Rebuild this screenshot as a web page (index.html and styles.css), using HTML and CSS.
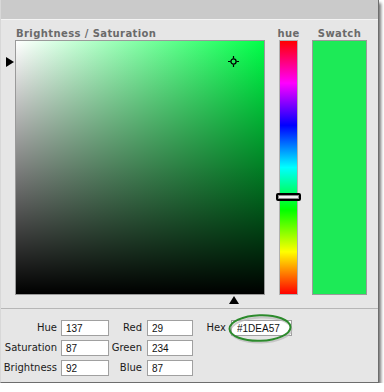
FILE: index.html
```html
<!DOCTYPE html>
<html lang="en">
<head>
<meta charset="UTF-8">
<meta name="viewport" content="width=device-width, initial-scale=1.0">
<title>Color Picker</title>
<link rel="stylesheet" href="styles.css">
</head>
<body>
<div class="window">
    <div class="titlebar"></div>

    <div class="picker">
        <div class="col sb-col">
            <div class="col-label">Brightness / Saturation</div>
            <div class="sb-box">
                <div class="sb-square"></div>
                <!-- markers: sat 87, bright 92 -->
                <div class="crosshair" style="left: 213px; top: 16px;">
                    <svg width="11" height="11" viewBox="0 0 11 11">
                        <circle cx="5.5" cy="5.5" r="2.6" fill="none" stroke="#000" stroke-width="1.3"/>
                        <path d="M5.5 0v2.5M5.5 8.5V11M0 5.5h2.5M8.5 5.5H11" stroke="#000" stroke-width="1.2"/>
                    </svg>
                </div>
                <div class="arrow-right" style="top: 16px;"></div>
                <div class="arrow-up" style="left: 213px;"></div>
            </div>
        </div>

        <div class="col hue-col">
            <div class="col-label">hue</div>
            <div class="hue-box">
                <div class="hue-bar"></div>
                <div class="hue-handle" style="top: 153px;"></div>
            </div>
        </div>

        <div class="col swatch-col">
            <div class="col-label">Swatch</div>
            <div class="swatch"></div>
        </div>
    </div>

    <div class="fields">
        <label class="lbl">Hue</label>
        <input class="field" type="text" value="137">
        <label class="lbl lbl-rgb">Red</label>
        <input class="field rgb" type="text" value="29">
        <label class="lbl lbl-hex">Hex</label>
        <div class="hex-wrap">
            <input class="field hex" type="text" value="#1DEA57">
            <svg class="ring" width="70" height="34" viewBox="0 0 70 34">
                <ellipse cx="34" cy="16" rx="30.5" ry="12.5" transform="rotate(-2 34 16)" fill="none" stroke="#b8b8b8" stroke-width="2" opacity="0.7"/>
                <ellipse cx="33" cy="14" rx="30.5" ry="12.8" transform="rotate(-2 33 14)" fill="none" stroke="#2c8a2c" stroke-width="2"/>
            </svg>
        </div>

        <label class="lbl">Saturation</label>
        <input class="field" type="text" value="87">
        <label class="lbl lbl-rgb">Green</label>
        <input class="field rgb" type="text" value="234">
        <span></span><span></span>

        <label class="lbl">Brightness</label>
        <input class="field" type="text" value="92">
        <label class="lbl lbl-rgb">Blue</label>
        <input class="field rgb" type="text" value="87">
        <span></span><span></span>
    </div>
</div>
</body>
</html>
```

FILE: styles.css
```css
body {
    margin: 0;
    padding: 0;
    background-color: #ffffff;
    font-family: "DejaVu Sans", Verdana, sans-serif;
    font-size: 10px;
    color: #1a1a1a;
}

.window {
    width: 377px;
    height: 382px;
    background-color: #e6e6e6;
    border-left: 1px solid #d8d8d8;
    border-right: 1px solid #6d6d6d;
    border-bottom: 1px solid #6d6d6d;
    box-shadow: 2px 3px 3px rgba(0, 0, 0, 0.55);
}

.titlebar {
    height: 19px;
    background-color: #cacaca;
    border-bottom: 1px solid #f4f4f4;
}

.picker {
    display: flex;
    gap: 14px;
    padding: 7px 0 0 14px;
}

.col {
    flex: none;
}

.sb-col {
    width: 250px;
}

.hue-col {
    width: 19px;
}

.swatch-col {
    width: 55px;
}

.col-label {
    display: flex;
    justify-content: center;
    height: 13px;
    line-height: 13px;
    font-weight: bold;
    color: #6a6a6a;
    letter-spacing: 0.4px;
    white-space: nowrap;
}

.sb-col .col-label {
    justify-content: flex-start;
    padding-left: 1px;
}

.sb-box {
    position: relative;
    width: 250px;
    height: 255px;
}

.sb-square {
    box-sizing: border-box;
    width: 250px;
    height: 255px;
    border: 1px solid #9a9a9a;
    background:
        linear-gradient(to top, #000000, rgba(0, 0, 0, 0)),
        linear-gradient(to right, #ffffff, #00ff48);
}

.crosshair {
    position: absolute;
    width: 11px;
    height: 11px;
}

.crosshair svg {
    display: block;
}

.arrow-right {
    position: absolute;
    left: -9px;
    width: 0;
    height: 0;
    border-top: 5px solid transparent;
    border-bottom: 5px solid transparent;
    border-left: 8px solid #000;
    margin-top: 1px;
}

.arrow-up {
    position: absolute;
    top: 256px;
    width: 0;
    height: 0;
    margin-left: 1px;
    border-left: 5px solid transparent;
    border-right: 5px solid transparent;
    border-bottom: 8px solid #000;
}

.hue-box {
    position: relative;
    width: 19px;
    height: 255px;
}

.hue-bar {
    box-sizing: border-box;
    width: 19px;
    height: 255px;
    border: 1px solid #b0b0b0;
    background: linear-gradient(to bottom, #ff0000, #ff00ff, #0000ff, #00ffff, #00ff00, #ffff00, #ff0000);
}

.hue-handle {
    position: absolute;
    left: -3px;
    width: 21px;
    height: 4px;
    border: 2px solid #000;
    border-radius: 2px;
    background-color: #f0f0f0;
    box-shadow: inset 0 0 0 1px #8a8a8a;
}

.swatch {
    box-sizing: border-box;
    width: 55px;
    height: 255px;
    border: 1px solid #9a9a9a;
    background-color: #1dea57;
}

.fields {
    display: grid;
    grid-template-columns: 60px 48px 38px 46px 38px 61px;
    grid-auto-rows: 16px;
    row-gap: 4px;
    margin-top: 13px;
    border-top: 1px solid #b6b6b6;
    padding-top: 11px;
}

.lbl {
    line-height: 16px;
    text-align: right;
    padding-right: 4px;
    white-space: nowrap;
}

.lbl-rgb {
    padding-right: 5px;
}

.lbl-hex {
    padding-right: 5px;
}

.field {
    box-sizing: border-box;
    width: 100%;
    height: 16px;
    margin: 0;
    padding: 0 0 0 4px;
    border: 1px solid #a0a0a0;
    background-color: #ffffff;
    font-family: "Liberation Sans", Arial, sans-serif;
    font-size: 10px;
    color: #111;
    outline: none;
}

.hex-wrap {
    position: relative;
}

.hex {
    padding-left: 5px;
}

.ring {
    position: absolute;
    left: -4px;
    top: -6px;
    pointer-events: none;
}
```
